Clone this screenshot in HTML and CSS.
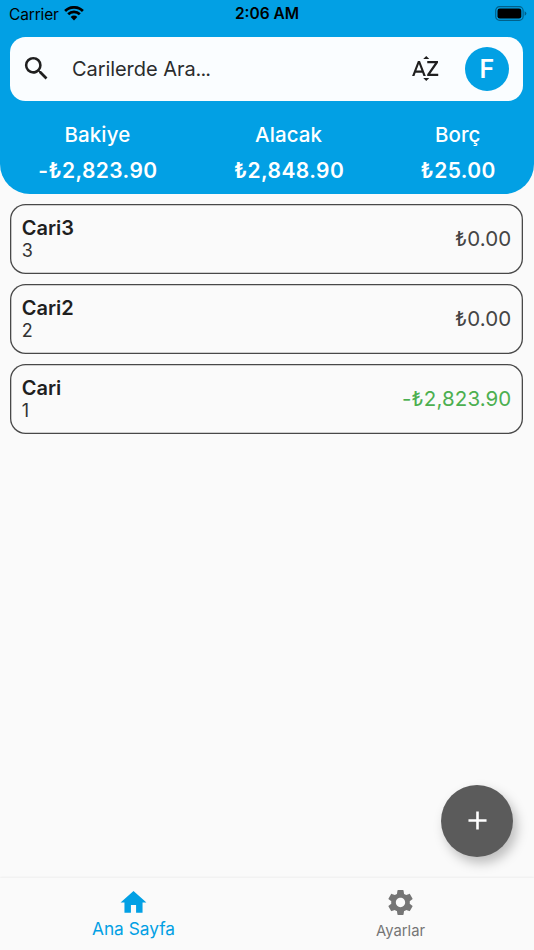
FILE: index.html
```html
<!DOCTYPE html>
<html lang="tr">
<head>
<meta charset="utf-8">
<title>Cariler</title>
<link rel="stylesheet" href="styles.css">
</head>
<body>
<div class="app">
  <header class="header">
    <div class="status">
      <div class="status-left">
        <span class="carrier">Carrier</span>
        <svg class="wifi" viewBox="0 0 20 15"><path d="M10 9.6a4.6 4.6 0 0 1 3.3 1.4L10 14.4l-3.3-3.4a4.6 4.6 0 0 1 3.3-1.4z"/><path d="M4.2 8.3a8.2 8.2 0 0 1 11.6 0M1.1 5a12.6 12.6 0 0 1 17.8 0" fill="none" stroke="#000" stroke-width="2.7"/></svg>
      </div>
      <span class="time">2:06 AM</span>
      <svg class="battery" viewBox="0 0 32 15"><rect x=".7" y=".7" width="27.4" height="13.6" rx="3.8" fill="none" stroke="#00608a" stroke-width="1.2"/><rect x="2.5" y="2.5" width="23.8" height="10" rx="2.3"/><path d="M29.6 5.2q1.8.7 1.8 2.3t-1.8 2.3z" fill="#00608a"/></svg>
    </div>
    <div class="search">
      <svg class="icon" viewBox="0 0 24 24"><path d="M15.5 14h-.79l-.28-.27A6.471 6.471 0 0 0 16 9.5 6.5 6.5 0 1 0 9.5 16c1.61 0 3.09-.59 4.23-1.57l.27.28v.79l5 4.99L20.49 19l-4.99-5zm-6 0C7.01 14 5 11.99 5 9.5S7.01 5 9.5 5 14 7.01 14 9.5 11.99 14 9.5 14z"/></svg>
      <span class="placeholder">Carilerde Ara<span class="dots">...</span></span>
      <svg class="icon" viewBox="0 0 24 24"><path d="M14.94 4.66h-4.72l2.36-2.36zm-4.69 14.71h4.66l-2.33 2.33zM6.1 6.27L1.6 17.73h1.84l.92-2.45h5.11l.92 2.45h1.84L7.74 6.27H6.1zm-1.13 7.37l1.94-5.18 1.94 5.18H4.97zm10.76 2.5h6.12v1.59h-8.53v-1.29l5.92-8.56h-5.88v-1.6h8.3v1.26l-5.93 8.6z"/></svg>
      <span class="avatar">F</span>
    </div>
    <div class="totals">
      <div class="total"><span class="label">Bakiye</span><span class="sum">-₺2,823.90</span></div>
      <div class="total"><span class="label">Alacak</span><span class="sum">₺2,848.90</span></div>
      <div class="total"><span class="label">Borç</span><span class="sum">₺25.00</span></div>
    </div>
  </header>
  <main class="list">
    <div class="card"><div><div class="name">Cari3</div><div class="code">3</div></div><span class="amount">₺0.00</span></div>
    <div class="card"><div><div class="name">Cari2</div><div class="code">2</div></div><span class="amount">₺0.00</span></div>
    <div class="card"><div><div class="name">Cari</div><div class="code">1</div></div><span class="amount green">-₺2,823.90</span></div>
  </main>
  <div class="fab"><svg class="icon" viewBox="0 0 24 24"><path d="M19 13h-6v6h-2v-6H5v-2h6V5h2v6h6v2z"/></svg></div>
  <nav class="nav">
    <div class="tab active"><svg class="icon" viewBox="0 0 24 24"><path d="M10 20v-6h4v6h5v-8h3L12 3 2 12h3v8z"/></svg><span>Ana Sayfa</span></div>
    <div class="tab"><svg class="icon" viewBox="0 0 24 24"><path d="M19.14 12.94c.04-.3.06-.61.06-.94 0-.32-.02-.64-.07-.94l2.03-1.58c.18-.14.23-.41.12-.61l-1.92-3.32c-.12-.22-.37-.29-.59-.22l-2.39.96c-.5-.38-1.03-.7-1.62-.94l-.36-2.54c-.04-.24-.24-.41-.48-.41h-3.84c-.24 0-.43.17-.47.41l-.36 2.54c-.59.24-1.13.57-1.62.94l-2.39-.96c-.22-.08-.47 0-.59.22L2.74 8.87c-.12.21-.08.47.12.61l2.03 1.58c-.05.3-.09.63-.09.94s.02.64.07.94l-2.03 1.58c-.18.14-.23.41-.12.61l1.92 3.32c.12.22.37.29.59.22l2.39-.96c.5.38 1.03.7 1.62.94l.36 2.54c.05.24.24.41.48.41h3.84c.24 0 .44-.17.47-.41l.36-2.54c.59-.24 1.13-.56 1.62-.94l2.39.96c.22.08.47 0 .59-.22l1.92-3.32c.12-.22.07-.47-.12-.61l-2.01-1.58zM12 15.6c-1.98 0-3.6-1.62-3.6-3.6s1.62-3.6 3.6-3.6 3.6 1.62 3.6 3.6-1.62 3.6-3.6 3.6z"/></svg><span>Ayarlar</span></div>
  </nav>
</div>
</body>
</html>
```
FILE: styles.css
```css
* { box-sizing: border-box; }
body { margin: 0; font-family: Inter, "Noto Sans", sans-serif; color: #1f1f1f; background: #fafafa; }
.app { position: relative; width: 534px; height: 950px; display: flex; flex-direction: column; overflow: hidden; }
.header { height: 194px; background: #02a0e4; border-radius: 0 0 30px 30px; }
.status { height: 36.5px; display: grid; grid-template-columns: 1fr auto 1fr; padding: 4px 7px 0 9px; align-items: start; color: #000; }
.status-left { display: flex; align-items: center; gap: 6px; height: 20px; }
.carrier { font-size: 15.5px; letter-spacing: -.15px; }
.wifi { width: 20px; height: 15px; margin: -2px 0 0 -1px; }
.time { font-size: 15.5px; line-height: 20px; font-weight: 600; margin-left: -2px; }
.battery { width: 32px; height: 15px; justify-self: end; margin-top: 2px; }
.icon { width: 31px; height: 31px; fill: currentColor; flex: none; display: block; }
.search { height: 64.5px; margin: 0 10.6px 0 10.4px; padding: 0 14px 0 11px; background: #fafdff; border-radius: 15.5px; display: flex; align-items: center; }
.placeholder { flex: 1; margin-left: 19.5px; font-size: 20px; letter-spacing: -.05px; color: #2a2c2d; }
.dots { letter-spacing: -.9px; }
.avatar { width: 44px; height: 44px; margin-left: 24px; border-radius: 50%; background: #02a0e4; color: #fff; display: flex; align-items: center; justify-content: center; font-size: 25px; font-weight: 600; padding-right: 1px; }
.totals { display: flex; justify-content: space-around; padding-top: 20px; color: #fff; }
.total { display: flex; flex-direction: column; align-items: center; gap: 8px; line-height: 28px; }
.label { font-size: 20.5px; font-weight: 550; letter-spacing: .1px; margin-left: -1px; }
.sum { font-size: 21px; font-weight: 600; letter-spacing: .4px; }
.list { flex: 1; display: flex; flex-direction: column; gap: 10.3px; padding: 10.3px 10.6px 10.3px 10.4px; }
.card { height: 69.7px; border-radius: 15.5px; box-shadow: inset 0 0 0 1.3px #484848; padding: 1px 12px 1px 11.3px; display: flex; align-items: center; justify-content: space-between; }
.name { font-size: 20px; font-weight: 600; line-height: 24px; }
.code { font-size: 18px; line-height: 22px; color: #333; }
.amount { font-size: 20.5px; color: #444; letter-spacing: .1px; padding-bottom: 2px; }
.green { color: #4caf50; }
.nav { height: 72px; display: flex; background: #fafafa; box-shadow: 0 -1px 2px rgba(0,0,0,.05); }
.tab { flex: 1; display: flex; flex-direction: column; align-items: center; padding-top: 9px; font-size: 14.8px; line-height: 26px; color: #757575; }
.tab.active { color: #02a0e4; font-size: 17.3px; line-height: 22px; }
.fab { position: absolute; left: 441px; top: 784.5px; width: 72px; height: 72px; border-radius: 50%; background: #5b5b5b; color: #fff; display: flex; align-items: center; justify-content: center; box-shadow: 4px 6px 12px rgba(0,0,0,.25); }
```
